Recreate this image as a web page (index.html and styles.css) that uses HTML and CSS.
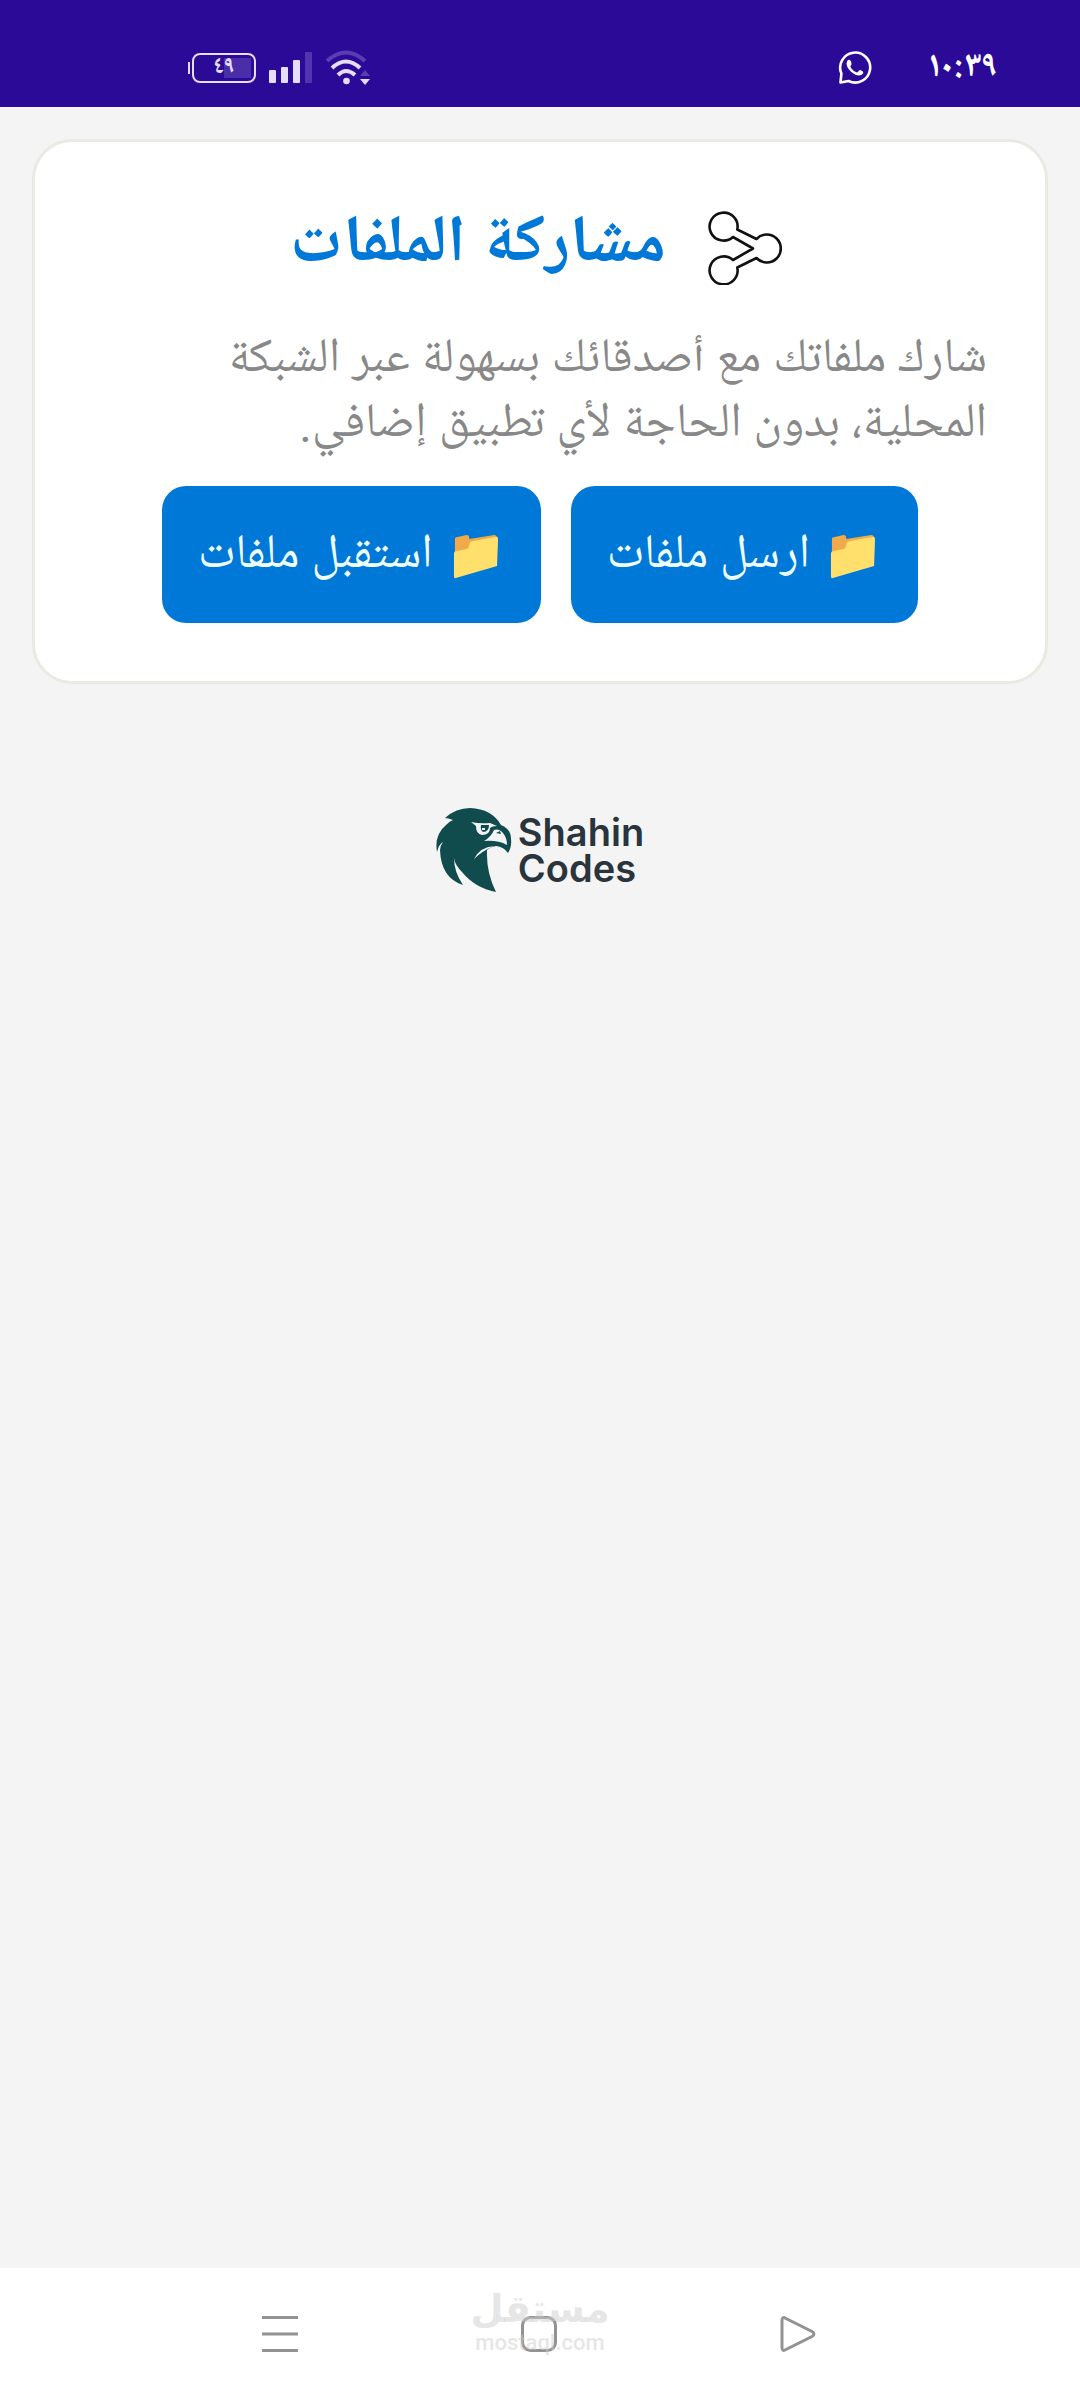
FILE: index.html
```html
<!DOCTYPE html>
<html lang="ar" dir="rtl">
<head>
<meta charset="utf-8">
<meta name="viewport" content="width=device-width, initial-scale=1">
<title>مشاركة الملفات</title>
<link rel="stylesheet" href="styles.css">
</head>
<body>
<header class="status">
  <div class="status-group">
    <time class="clock">١٠:٣٩</time>
    <svg class="whatsapp" viewBox="0 0 34 34" aria-hidden="true">
      <path d="M3.400 22.500A15 15 0 1 1 10.500 30L2.500 31.500Z" fill="none" stroke="#fff" stroke-width="2.600" stroke-linejoin="round"/>
      <path d="M9.500 9.500C11 8 13 9 13.500 12.500C14 14 12 14.500 12.500 16C14 19 17 21 19 21.500C20.500 21.500 20.500 19 22 19C24.500 20 26 21 25 22.500C23 25.500 18 25 14 21.500C10 18.500 7 13 9.500 9.500Z" fill="#fff"/>
    </svg>
  </div>
  <div class="status-group status-signals">
    <svg class="wifi" viewBox="0 0 46 36" aria-hidden="true" fill="none" stroke="#e6ddfb" stroke-width="4">
      <path d="M2 11Q21 -6 40 11" stroke="#5a3db3"/>
      <path d="M7 18Q21 5 35 18"/>
      <path d="M13 25Q21 17 30 25"/>
      <circle cx="21.500" cy="31" r="3.300" fill="#e6ddfb" stroke="none"/>
      <path d="M35 26l5-6 5 6z" fill="#5a3db3" stroke="none"/>
      <path d="M35 29h10l-5 6z" fill="#e6ddfb" stroke="none"/>
    </svg>
    <svg class="bars" viewBox="0 0 43 31" aria-hidden="true" fill="#e6ddfb">
      <rect x="0" y="18" width="7" height="13" rx="1"/>
      <rect x="12" y="15" width="7" height="16" rx="1"/>
      <rect x="24" y="8" width="7" height="23" rx="1"/>
      <rect x="36" y="0" width="7" height="31" rx="1" fill="#5433b0"/>
    </svg>
    <div class="battery"><span class="battery-level">٤٩</span></div>
  </div>
</header>

<main class="content">
  <section class="card">
    <div class="card-head">
      <svg class="share" viewBox="0 0 74 74" aria-hidden="true">
        <path d="M29.300 18.500L48.500 28A14 14 0 1 1 48.500 47L29.300 56.500A14 14 0 1 1 25 49L45 37.500L25 26A14 14 0 1 1 29.300 18.500Z" fill="none" stroke="#111" stroke-width="2.600" stroke-linejoin="round"/>
      </svg>
      <h1 class="title">مشاركة الملفات</h1>
    </div>
    <p class="lead">شارك ملفاتك مع أصدقائك بسهولة عبر الشبكة المحلية، بدون الحاجة لأي تطبيق إضافي.</p>
    <div class="actions">
      <button class="action" type="button">
        <svg class="folder" viewBox="0 0 46 44" aria-hidden="true"><use href="#folder"/></svg>
        <span>ارسل ملفات</span>
      </button>
      <button class="action" type="button">
        <svg class="folder" viewBox="0 0 46 44" aria-hidden="true"><use href="#folder"/></svg>
        <span>استقبل ملفات</span>
      </button>
    </div>
  </section>

  <footer class="brand" dir="ltr">
    <svg class="falcon" viewBox="0 0 76 84" aria-hidden="true">
      <path d="M9 10Q20 0 34 0Q56 1 65 17Q75 21 75 31Q76 39 72 45Q68 39 60 38Q54 39 51 42Q50 64 60 84Q39 80 26 64Q19 57 18 50Q18 64 27 77Q5 70 4 42Q4 38 7 34Q3 36 1 44Q-2 27 10 17Q14 13 17 12Q12 10 9 10Z" fill="#104b4e"/>
      <path d="M38 51Q44 39 58 38Q46 43 38 51Z" fill="#f4f4f4"/>
      <path d="M35 14Q44 16 54 15L61 18Q56 18 54 20Q54 27 46 27Q40 26 40 18Z" fill="#f4f4f4"/>
      <path d="M45 17H53Q53 24 47 24Q44 22 45 17Z" fill="#104b4e"/>
      <path d="M46 21h3" stroke="#f4f4f4" stroke-width="2"/>
      <path d="M48 33Q55 29 58 22Q63 20 67 25Q71 30 71 37Q62 32 48 33Z" fill="#f4f4f4"/>
      <path d="M60 25l4-2 1 3z" fill="#104b4e"/>
    </svg>
    <span class="brand-name">Shahin<br>Codes</span>
  </footer>
</main>

<nav class="system-nav">
  <button class="nav-button" type="button" aria-label="رجوع">
    <svg viewBox="0 0 36 36"><path d="M2 4.500Q2 0 6 2.500L32 15.500Q36 18 32 20.500L6 33.500Q2 36 2 31.500Z"/></svg>
  </button>
  <button class="nav-button" type="button" aria-label="الرئيسية">
    <svg viewBox="0 0 36 36"><rect x="1.500" y="1.500" width="33" height="33" rx="8"/></svg>
  </button>
  <button class="nav-button" type="button" aria-label="القائمة">
    <svg viewBox="0 0 36 36"><path d="M0 1.500H36M0 18H36M0 34.500H36"/></svg>
  </button>
  <div class="watermark">
    <span class="watermark-ar">مستقل</span>
    <span class="watermark-en">mostaql.com</span>
  </div>
</nav>

<svg width="0" height="0" class="sprite" aria-hidden="true">
  <symbol id="folder" viewBox="0 0 48 44" preserveAspectRatio="none">
    <path d="M2 4Q2 2 5 2L14 0Q17 0 17 3V4L43 0Q46 0 46 4V12L2 24Z" fill="#f0a94b"/>
    <path d="M1 19Q1 16 4 16L14 14Q17 13 17 9Q18 6 21 6L44 2Q47 1 47 4L46 31L3 43Q1 44 1 41Z" fill="#ffe06c"/>
  </symbol>
</svg>
</body>
</html>
```
FILE: styles.css
```css
* { box-sizing: border-box; }

body {
  margin: 0;
  min-height: 100vh;
  display: flex;
  flex-direction: column;
  background: #f4f4f4;
  font-family: Roboto, "Noto Naskh Arabic UI", "Noto Naskh Arabic", sans-serif;
}

.sprite { position: absolute; }
svg { flex: none; }

.status {
  height: 107px;
  padding: 28px 82px 0 192px;
  display: flex;
  justify-content: space-between;
  align-items: center;
  background: #2c0a98;
  color: #fff;
}
.status-group { display: flex; align-items: center; gap: 56px; }
.status-signals { gap: 13px; }
.clock {
  font-family: "Noto Naskh Arabic UI", sans-serif;
  font-size: 36px;
  line-height: 36px;
  font-weight: 700;
}
.whatsapp { width: 34px; height: 34px; }
.wifi { width: 46px; height: 36px; }
.bars { width: 43px; height: 31px; }
.battery {
  position: relative;
  width: 64px;
  height: 30px;
  border: 2px solid #e6ddfb;
  border-radius: 8px;
  color: #e6ddfb;
  background: linear-gradient(#4a2da8, #4a2da8) 30px 3px / 27px 20px no-repeat;
}
.battery::before {
  content: "";
  position: absolute;
  left: -6px;
  top: 7px;
  width: 2px;
  height: 12px;
  background: #e6ddfb;
}
.battery-level {
  display: block;
  text-align: center;
  font-size: 24px;
  line-height: 26px;
  font-weight: 700;
}

.content { flex: 1; padding: 32px; }

.card {
  padding: 60px 58px 58px;
  border: 3px solid #e8ebe2;
  border-radius: 40px;
  background: #fff;
}
.card-head {
  display: flex;
  justify-content: center;
  align-items: center;
  gap: 42px;
  height: 92px;
  padding-inline-start: 8px;
}
.share { width: 74px; height: 74px; }
.title {
  margin: 0;
  font-size: 66px;
  line-height: 80px;
  font-weight: 700;
  color: #0078d7;
}
.lead {
  margin: 34px 0 28px;
  font-size: 48px;
  line-height: 65px;
  color: #888;
}
.actions { display: flex; justify-content: center; gap: 30px; }
.action {
  height: 137px;
  padding: 4px 42px 0 36px;
  display: flex;
  align-items: center;
  gap: 20px;
  border: 0;
  border-radius: 24px;
  background: #0078d7;
  color: #eff;
  font: inherit;
  font-size: 48px;
  line-height: 60px;
}
.folder { width: 46px; height: 44px; }

.brand {
  margin-top: 124px;
  display: flex;
  justify-content: center;
  align-items: center;
  gap: 6px;
}
.falcon { width: 76px; height: 84px; }
.brand-name {
  font-family: Inter, sans-serif;
  font-size: 38px;
  line-height: 36px;
  font-weight: 600;
  color: #29343d;
}

.system-nav {
  position: relative;
  height: 132px;
  padding: 0 264px 0 262px;
  display: flex;
  justify-content: space-between;
  align-items: center;
  background: #fff;
}
.nav-button {
  width: 36px;
  height: 36px;
  padding: 0;
  border: 0;
  background: none;
}
.nav-button svg {
  display: block;
  width: 36px;
  height: 36px;
  fill: none;
  stroke: #929292;
  stroke-width: 3;
}
.watermark {
  position: absolute;
  inset: 18px 0 auto;
  display: flex;
  flex-direction: column;
  align-items: center;
  color: rgba(205, 205, 205, 0.5);
  pointer-events: none;
}
.watermark-ar {
  font-family: "DejaVu Sans", sans-serif;
  font-size: 38px;
  line-height: 46px;
  font-weight: 700;
}
.watermark-en {
  font-family: Roboto, sans-serif;
  font-size: 22px;
  line-height: 22px;
  font-weight: 500;
}
```
